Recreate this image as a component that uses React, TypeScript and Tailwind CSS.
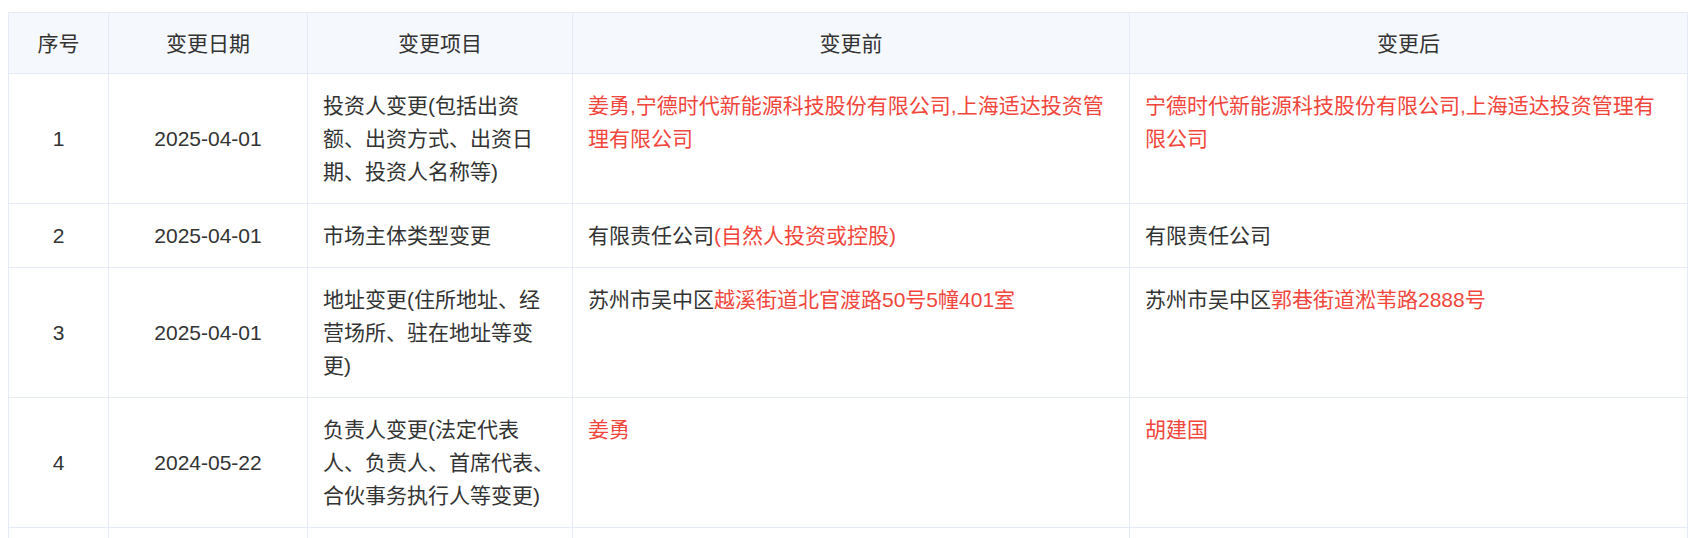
import React from "react";

type Seg = { t: string; red?: boolean };
type Row = {
  no: string;
  date: string;
  item: string;
  before: Seg[];
  after: Seg[];
};

const rows: Row[] = [
  {
    no: "1",
    date: "2025-04-01",
    item: "投资人变更(包括出资额、出资方式、出资日期、投资人名称等)",
    before: [{ t: "姜勇,宁德时代新能源科技股份有限公司,上海适达投资管理有限公司", red: true }],
    after: [{ t: "宁德时代新能源科技股份有限公司,上海适达投资管理有限公司", red: true }],
  },
  {
    no: "2",
    date: "2025-04-01",
    item: "市场主体类型变更",
    before: [{ t: "有限责任公司" }, { t: "(自然人投资或控股)", red: true }],
    after: [{ t: "有限责任公司" }],
  },
  {
    no: "3",
    date: "2025-04-01",
    item: "地址变更(住所地址、经营场所、驻在地址等变更)",
    before: [{ t: "苏州市吴中区" }, { t: "越溪街道北官渡路50号5幢401室", red: true }],
    after: [{ t: "苏州市吴中区" }, { t: "郭巷街道淞苇路2888号", red: true }],
  },
  {
    no: "4",
    date: "2024-05-22",
    item: "负责人变更(法定代表人、负责人、首席代表、合伙事务执行人等变更)",
    before: [{ t: "姜勇", red: true }],
    after: [{ t: "胡建国", red: true }],
  },
];

const headers = ["序号", "变更日期", "变更项目", "变更前", "变更后"];

function Segs({ segs }: { segs: Seg[] }) {
  return (
    <>
      {segs.map((s, i) => (
        <span key={i} className={s.red ? "text-[#f2463c]" : "text-[#333333]"}>
          {s.t}
        </span>
      ))}
    </>
  );
}

export default function App() {
  return (
    <div
      className="min-h-screen bg-white pt-3 pl-2 text-[21px] leading-[33px] text-[#333333]"
      style={{ fontFamily: '"Liberation Sans", "Noto Sans CJK SC", sans-serif' }}
    >
      <div className="grid w-[1680px] grid-cols-[99px_198px_264px_556px_557px] gap-px border border-[#e4ebf6] bg-[#e4ebf6]">
        {headers.map((h) => (
          <div
            key={h}
            className="flex h-[60px] items-center justify-center bg-[#f5f8fd]"
          >
            {h}
          </div>
        ))}
        {rows.map((r) => (
          <React.Fragment key={r.no}>
            <div className="flex items-center justify-center bg-white py-[15px]">
              {r.no}
            </div>
            <div className="flex items-center justify-center bg-white py-[15px]">
              {r.date}
            </div>
            <div className="flex items-center bg-white px-[15px] py-[15px]">
              <div className="w-full break-all">{r.item}</div>
            </div>
            <div className="bg-white px-[15px] py-[15px]">
              <Segs segs={r.before} />
            </div>
            <div className="bg-white px-[15px] py-[15px]">
              <Segs segs={r.after} />
            </div>
          </React.Fragment>
        ))}
        <div className="h-[63px] bg-white" />
        <div className="h-[63px] bg-white" />
        <div className="h-[63px] bg-white" />
        <div className="h-[63px] bg-white" />
        <div className="h-[63px] bg-white" />
      </div>
    </div>
  );
}
